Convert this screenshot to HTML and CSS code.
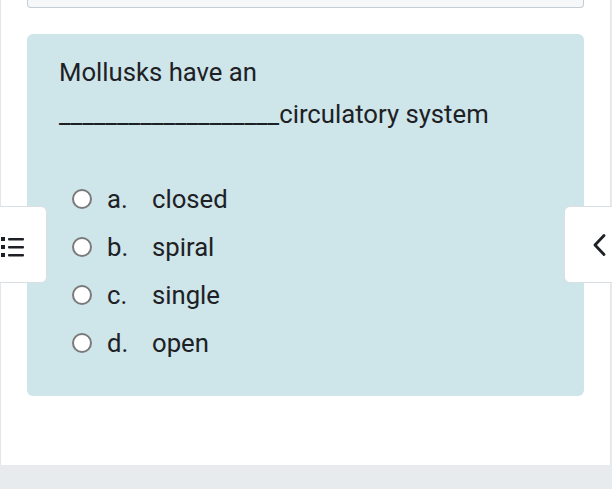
FILE: index.html
```html
<!DOCTYPE html>
<html>
<head>
<meta charset="utf-8">
<link rel="stylesheet" href="styles.css">
</head>
<body>
<div class="panel">
  <div class="prev-box"></div>
  <div class="card">
    <div class="qtext">Mollusks have an<br>___________________circulatory system</div>
    <div class="answers">
      <label class="opt"><span class="radio"></span><span class="letter">a.</span><span class="ans">closed</span></label>
      <label class="opt"><span class="radio"></span><span class="letter">b.</span><span class="ans">spiral</span></label>
      <label class="opt"><span class="radio"></span><span class="letter">c.</span><span class="ans">single</span></label>
      <label class="opt"><span class="radio"></span><span class="letter">d.</span><span class="ans">open</span></label>
    </div>
  </div>
</div>
<div class="side-btn left-btn">
  <svg width="40" height="30" viewBox="0 0 40 30">
    <rect x="14" y="7" width="4" height="4" fill="#1d2125"/>
    <rect x="14" y="15" width="4" height="4" fill="#1d2125"/>
    <rect x="14" y="23" width="4" height="4" fill="#1d2125"/>
    <rect x="21" y="8" width="16" height="2.6" rx="1" fill="#1d2125"/>
    <rect x="21" y="16" width="16" height="2.6" rx="1" fill="#1d2125"/>
    <rect x="21" y="24" width="16" height="2.6" rx="1" fill="#1d2125"/>
  </svg>
</div>
<div class="side-btn right-btn">
  <svg width="20" height="26" viewBox="0 0 20 26">
    <path d="M15 3.5 L6 13 L15 22.5" fill="none" stroke="#1d2125" stroke-width="2.8" stroke-linecap="round" stroke-linejoin="round"/>
  </svg>
</div>
</body>
</html>
```
FILE: styles.css
```css
html, body {
  margin: 0;
  padding: 0;
}
body {
  background: #e8ebee;
  font-family: Roboto, "Liberation Sans", sans-serif;
  color: #1d2125;
  width: 612px;
  height: 489px;
  overflow: hidden;
  position: relative;
}
.panel {
  box-sizing: border-box;
  width: 611px;
  height: 465px;
  background: #ffffff;
  border-left: 1px solid #e3e7ea;
  border-right: 1px solid #e3e7ea;
  padding: 0 26px;
}
.prev-box {
  height: 8px;
  background: #f6f7f9;
  border: 1px solid #c3ced4;
  border-top: none;
  border-radius: 0 0 4px 4px;
  box-sizing: border-box;
}
.card {
  margin-top: 26px;
  background: #cee5e9;
  border-radius: 6px;
  padding: 17px 32px 30px 32px;
  height: 362px;
  box-sizing: border-box;
}
.qtext {
  font-size: 25.7px;
  line-height: 42px;
}
.answers {
  margin-top: 40px;
  display: flex;
  flex-direction: column;
}
.opt {
  display: flex;
  align-items: center;
  height: 48px;
  font-size: 25.7px;
  padding-left: 13px;
}
.radio {
  box-sizing: border-box;
  width: 20px;
  height: 20px;
  border-radius: 50%;
  border: 2px solid #7a7a7a;
  background: #ffffff;
  flex: none;
}
.letter {
  margin-left: 15px;
  width: 45px;
}
.side-btn {
  position: absolute;
  top: 206px;
  height: 77px;
  box-sizing: border-box;
  background: #ffffff;
  border: 1px solid #dadfe3;
  border-radius: 6px;
  display: flex;
  align-items: center;
}
.left-btn {
  left: -14px;
  width: 61px;
  justify-content: flex-start;
}
.right-btn {
  left: 564px;
  width: 62px;
  justify-content: flex-start;
  padding-left: 24px;
}
```
